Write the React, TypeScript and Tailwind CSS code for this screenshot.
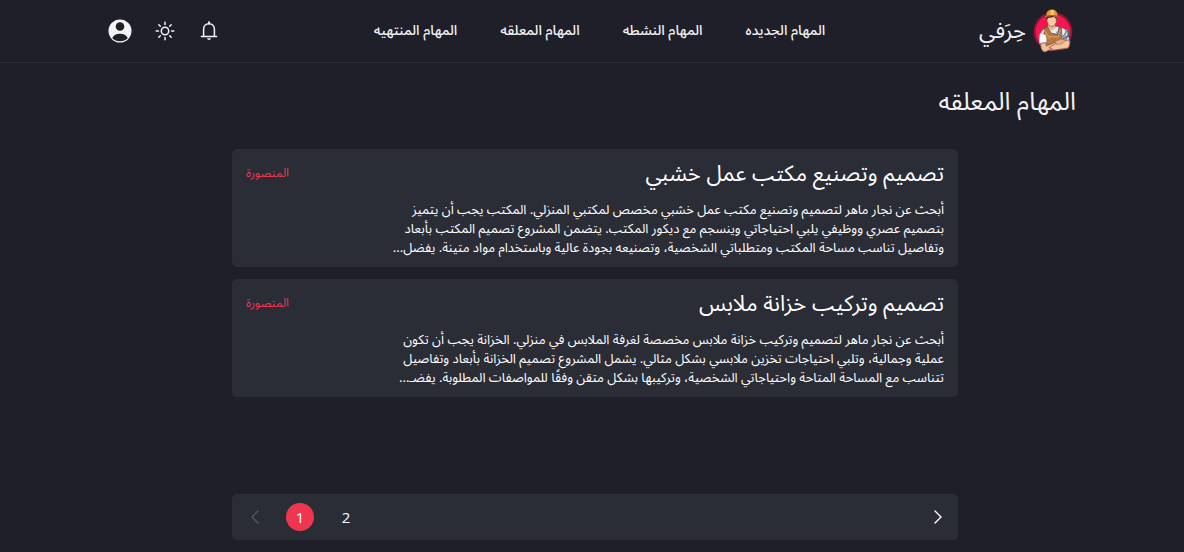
import { useState } from 'react';

const navLinks = ['المهام الجديده', 'المهام النشطه', 'المهام المعلقه', 'المهام المنتهيه'];

const tasks = [
  {
    title: 'تصميم وتصنيع مكتب عمل خشبي',
    city: 'المنصورة',
    lines: [
      'أبحث عن نجار ماهر لتصميم وتصنيع مكتب عمل خشبي مخصص لمكتبي المنزلي. المكتب يجب أن يتميز',
      'بتصميم عصري ووظيفي يلبي احتياجاتي وينسجم مع ديكور المكتب. يتضمن المشروع تصميم المكتب بأبعاد',
      'وتفاصيل تناسب مساحة المكتب ومتطلباتي الشخصية، وتصنيعه بجودة عالية وباستخدام مواد متينة. يفضل...',
    ],
  },
  {
    title: 'تصميم وتركيب خزانة ملابس',
    city: 'المنصورة',
    lines: [
      'أبحث عن نجار ماهر لتصميم وتركيب خزانة ملابس مخصصة لغرفة الملابس في منزلي. الخزانة يجب أن تكون',
      'عملية وجمالية، وتلبي احتياجات تخزين ملابسي بشكل مثالي. يشمل المشروع تصميم الخزانة بأبعاد وتفاصيل',
      'تتناسب مع المساحة المتاحة واحتياجاتي الشخصية، وتركيبها بشكل متقن وفقًا للمواصفات المطلوبة. يفضـ...',
    ],
  },
];

function WorkerLogo() {
  return (
    <svg viewBox="216 26 126 138" className="h-[46px] w-[42px]" aria-hidden="true">
      <circle cx="279" cy="97" r="58" fill="#9c1238" />
      <circle cx="279" cy="97" r="52" fill="#f5164f" />
      <path d="M243 97q6-10 22-15l25-1q24 4 33 14l8 36-10 17-52 6-25-4-5-22z" fill="#e9edf2" stroke="#4b3038" strokeWidth="2" />
      <path d="M266 72h18l3 14-12 8-13-9z" fill="#eeb48d" />
      <path d="M261 50q-2 21 6 29 8 6 16 0 9-9 7-29z" fill="#f8caa5" stroke="#4b2a25" strokeWidth="1.5" />
      <path d="M260 48v15l4-7 19-3 4 4 1 7 3-15z" fill="#4a2220" />
      <path d="M258 51q-1-15 10-19l8-2 8 2q10 5 9 19l-17-3z" fill="#e99d43" stroke="#70411f" strokeWidth="2" />
      <path d="M271 34l2 14h8l1-14-5-3z" fill="#f8c66c" />
      <path d="M255 52q20-7 40 1" fill="none" stroke="#b76a29" strokeWidth="3" />
      <path d="M255 84l7-2 12 20 19 3 4-22 7 3 2 34-13 20-39-5-4-20z" fill="#b47743" stroke="#633b29" strokeWidth="2" />
      <path d="M252 91l18 29M301 91l-6 22M265 111l29 3" stroke="#e1a35d" strokeWidth="3" fill="none" />
      <path d="M240 101q-5 22-1 32l20-3q3-13-2-24z" fill="#f7f8fa" stroke="#85818b" />
      <path d="M242 132q0 19 8 25 7 4 15-4l42-18 13-9-3-8-15 4-43 18-2-10z" fill="#f5bd95" stroke="#75433a" strokeWidth="2" />
      <path d="M267 145l20-12 39-12q8 13-1 25l-42 6z" fill="#f7c39c" stroke="#75433a" strokeWidth="2" />
      <path d="M285 126l19-7 13 4-8 9-18 5z" fill="#eba77d" stroke="#75433a" />
      <path d="M291 99l28 17M320 92l-9 24 13-5 2-15" stroke="#536273" strokeWidth="5" strokeLinecap="round" fill="none" />
      <path d="M291 98l27 17M320 92l-8 22" stroke="#c9d1da" strokeWidth="2" strokeLinecap="round" fill="none" />
    </svg>
  );
}

function UserIcon() {
  return (
    <svg viewBox="0 0 24 24" className="size-6" aria-hidden="true">
      <circle cx="12" cy="12" r="11.5" fill="#f3f3f5" />
      <circle cx="12" cy="7.5" r="4.3" fill="#1f1f29" />
      <path d="M4.2 19.1c1.3-3 4.1-4.4 7.8-4.4s6.5 1.4 7.8 4.4c-2 2.1-4.6 3.2-7.8 3.2s-5.8-1.1-7.8-3.2z" fill="#1f1f29" />
    </svg>
  );
}

function SunIcon() {
  return (
    <svg viewBox="0 0 20 20" className="size-5" fill="none" stroke="#f3f3f5" strokeWidth="1.5" strokeLinecap="round" aria-hidden="true">
      <circle cx="10" cy="10" r="3.7" />
      <path d="M10 1.2v2.2M10 16.6v2.2M1.2 10h2.2M16.6 10h2.2M3.8 3.8l1.5 1.5M14.7 14.7l1.5 1.5M3.8 16.2l1.5-1.5M14.7 5.3l1.5-1.5" />
    </svg>
  );
}

function BellIcon() {
  return (
    <svg viewBox="0 0 20 20" className="size-5" fill="none" stroke="#f3f3f5" strokeWidth="1.5" strokeLinejoin="round" aria-hidden="true">
      <path d="M4.6 15.2V8.3c0-3.2 2.1-5.5 5.4-5.5s5.4 2.3 5.4 5.5v6.9" />
      <path d="M2.4 15.4h15.2" strokeLinecap="round" />
      <path d="M10 2.6V1.2" strokeWidth="2" strokeLinecap="round" />
      <path d="M8 17.3h4c-.3 1.1-1 1.6-2 1.6s-1.7-.5-2-1.6z" fill="#f3f3f5" stroke="none" />
    </svg>
  );
}

function Chevron({ d }: { d: string }) {
  return (
    <svg viewBox="0 0 10 14" className="h-[14px] w-[10px]" fill="none" stroke="currentColor" strokeWidth="1.4" strokeLinecap="round" strokeLinejoin="round" aria-hidden="true">
      <path d={d} />
    </svg>
  );
}

export default function App() {
  const [page, setPage] = useState(1);

  return (
    <div dir="rtl" className="min-h-screen bg-[#1f1f29] font-['Noto_Sans_Arabic','DejaVu_Sans',sans-serif] text-[#f3f3f5]">
      <header className="border-b border-[#2a2c36]">
        <div className="mx-auto flex h-[62px] max-w-[968px] items-center justify-between">
          <a href="#" className="flex items-center gap-1.5 pr-0.5 text-[22px] leading-8">
            <WorkerLogo />
            <span>حِرَفي</span>
          </a>
          <nav className="flex gap-[43px] text-sm font-medium">
            {navLinks.map((label) => (
              <a key={label} href="#" className="whitespace-nowrap">{label}</a>
            ))}
          </nav>
          <div className="flex items-center gap-[22px]">
            <button type="button" aria-label="الإشعارات" className="p-px"><BellIcon /></button>
            <button type="button" aria-label="المظهر" className="p-px"><SunIcon /></button>
            <button type="button" aria-label="الحساب"><UserIcon /></button>
          </div>
        </div>
      </header>

      <main className="mx-auto max-w-[968px] pb-3">
        <h1 className="pt-[23px] text-[25px] leading-8">المهام المعلقه</h1>
        <div className="mt-[31px] pl-[6px]">
          <div className="mx-auto max-w-[726px]">
            <div className="flex min-h-[345px] flex-col gap-3">
              {tasks.map((task) => (
                <article key={task.title} className="rounded-[5px] bg-[#2a2c36] px-[14px] py-[9px]">
                  <div className="flex items-center justify-between">
                    <h2 className="text-[22px] leading-8 text-white">{task.title}</h2>
                    <span className="text-xs text-[#ef3651]">{task.city}</span>
                  </div>
                  <p className="mt-[11px] text-[13px] leading-[19px] text-white">
                    {task.lines.map((line) => (
                      <span key={line} className="block whitespace-nowrap">{line}</span>
                    ))}
                  </p>
                </article>
              ))}
            </div>
            <nav dir="ltr" aria-label="الصفحات" className="flex h-[46px] items-center rounded-[5px] bg-[#2a2c36] pr-[15px] pl-[18px] font-['Open_Sans',sans-serif] text-[15px] font-medium">
              <button type="button" aria-label="السابق" disabled={page === 1} onClick={() => setPage(1)} className="text-white disabled:text-[#54565f]">
                <Chevron d="M8 1L2 7l6 6" />
              </button>
              <div className="ml-[26px] flex gap-[18px]">
                {[1, 2].map((n) => (
                  <button key={n} type="button" onClick={() => setPage(n)} className={n === page ? 'size-7 rounded-full bg-[#ef3651] text-white' : 'size-7 rounded-full text-white'}>
                    {n}
                  </button>
                ))}
              </div>
              <button type="button" aria-label="التالي" disabled={page === 2} onClick={() => setPage(2)} className="ml-auto text-white disabled:text-[#54565f]">
                <Chevron d="M2 1l6 6-6 6" />
              </button>
            </nav>
          </div>
        </div>
      </main>
    </div>
  );
}
